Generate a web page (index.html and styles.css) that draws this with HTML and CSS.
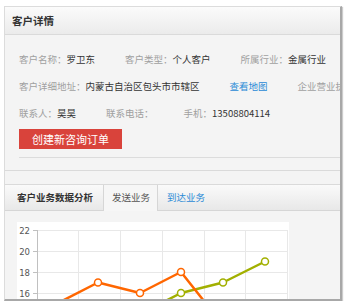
FILE: index.html
```html
<!DOCTYPE html>
<html lang="zh-CN">
<head>
    <meta charset="UTF-8">
    <meta name="viewport" content="width=device-width, initial-scale=1.0">
    <title>客户详情</title>
    <link rel="stylesheet" href="styles.css">
</head>
<body>
    <div class="frame">
        <div class="panel">
            <div class="panel-head">客户详情</div>
            <div class="panel-body">
                <div class="row">
                    <span class="item"><span class="label">客户名称：</span>罗卫东</span>
                    <span class="item"><span class="label">客户类型：</span>个人客户</span>
                    <span class="item"><span class="label">所属行业：</span>金属行业</span>
                </div>
                <div class="row">
                    <span class="item"><span class="label">客户详细地址：</span>内蒙古自治区包头市市辖区</span>
                    <a class="item link" href="#">查看地图</a>
                    <span class="item"><span class="label">企业营业执照：</span></span>
                </div>
                <div class="row">
                    <span class="item"><span class="label">联系人：</span>昊昊</span>
                    <span class="item"><span class="label">联系电话：</span></span>
                    <span class="item"><span class="label">手机：</span>13508804114</span>
                </div>
                <button class="btn-create">创建新咨询订单</button>
                <div class="divider"></div>
            </div>
        </div>

        <div class="panel panel-chart">
            <div class="tabs">
                <div class="tab tab-title">客户业务数据分析</div>
                <div class="tab tab-active">发送业务</div>
                <a class="tab tab-link" href="#">到达业务</a>
            </div>
            <div class="chart-wrap">
                <div class="chart">
                    <svg width="272" height="110" viewBox="0 0 272 110">
                        <g stroke="#e8e8e8" stroke-width="1">
                            <line x1="61.5" y1="8" x2="61.5" y2="110"/>
                            <line x1="103.5" y1="8" x2="103.5" y2="110"/>
                            <line x1="145.5" y1="8" x2="145.5" y2="110"/>
                            <line x1="187.5" y1="8" x2="187.5" y2="110"/>
                            <line x1="228.5" y1="8" x2="228.5" y2="110"/>
                            <line x1="270.5" y1="8" x2="270.5" y2="110"/>
                            <line x1="20" y1="8.5" x2="271" y2="8.5"/>
                            <line x1="20" y1="29.5" x2="271" y2="29.5"/>
                            <line x1="20" y1="50.5" x2="271" y2="50.5"/>
                            <line x1="20" y1="71.5" x2="271" y2="71.5"/>
                            <line x1="20" y1="92.5" x2="271" y2="92.5"/>
                        </g>
                        <g stroke="#c0c0c0" stroke-width="1">
                            <line x1="20.5" y1="8" x2="20.5" y2="110"/>
                            <line x1="16" y1="8.5" x2="20" y2="8.5"/>
                            <line x1="16" y1="29.5" x2="20" y2="29.5"/>
                            <line x1="16" y1="50.5" x2="20" y2="50.5"/>
                            <line x1="16" y1="71.5" x2="20" y2="71.5"/>
                            <line x1="16" y1="92.5" x2="20" y2="92.5"/>
                        </g>
                        <g class="axis-label" text-anchor="end">
                            <text x="13" y="11.5">22</text>
                            <text x="13" y="32.5">20</text>
                            <text x="13" y="53.5">18</text>
                            <text x="13" y="74.5">16</text>
                        </g>
                        <polyline fill="none" stroke="#a2b000" stroke-width="2.5" stroke-linejoin="round"
                                  points="123,92 164,71 206,60.5 248,39.5"/>
                        <g fill="#fff" stroke="#a2b000" stroke-width="1.5">
                            <circle cx="123" cy="92" r="3.5"/>
                            <circle cx="164" cy="71" r="3.5"/>
                            <circle cx="206" cy="60.5" r="3.5"/>
                            <circle cx="248" cy="39.5" r="3.5"/>
                        </g>
                        <polyline fill="none" stroke="#ff6600" stroke-width="2.5" stroke-linejoin="round"
                                  points="40,81.5 81,60.5 123,71 164,50 206,103"/>
                        <g fill="#fff" stroke="#ff6600" stroke-width="1.5">
                            <circle cx="40" cy="81.5" r="3.5"/>
                            <circle cx="81" cy="60.5" r="3.5"/>
                            <circle cx="123" cy="71" r="3.5"/>
                            <circle cx="164" cy="50" r="3.5"/>
                            <circle cx="206" cy="103" r="3.5"/>
                        </g>
                    </svg>
                </div>
            </div>
        </div>
    </div>
</body>
</html>
```

FILE: styles.css
```css
body {
    margin: 0;
    background-color: #fff;
    font-family: "Noto Sans CJK SC", "DejaVu Sans", sans-serif;
    font-size: 9.5px;
    color: #333;
}
.frame {
    margin: 6px 0 0 4px;
    width: 335px;
    height: 292px;
    overflow: hidden;
    background-color: #f4f4f4;
    border: 1px solid #dcdcdc;
    border-right: 2px solid #a8a8a8;
    border-bottom: 2px solid #a8a8a8;
    box-shadow: 1px 1px 1px #ccc;
}
.panel-head {
    height: 27px;
    line-height: 27px;
    padding-left: 7px;
    font-size: 10.5px;
    font-weight: bold;
    color: #333;
    background: linear-gradient(#fbfbfb, #ebebeb);
    border-bottom: 1px solid #dadada;
}
.panel-body {
    padding: 10px 0 12px 14px;
    border-bottom: 1px solid #dadada;
}
.row {
    display: flex;
    gap: 30px;
    height: 27px;
    align-items: center;
    white-space: nowrap;
}
.label {
    color: #a0a0a0;
}
.link {
    color: #2a8ad6;
    text-decoration: none;
}
.btn-create {
    display: block;
    margin-top: 3px;
    width: 103px;
    height: 20px;
    padding: 0;
    border: none;
    background-color: #d9433b;
    color: #fff;
    font-family: inherit;
    font-size: 11px;
    cursor: pointer;
}
.divider {
    margin-top: 8px;
    border-top: 1px solid #dcdcdc;
}
.panel-chart {
    margin-top: 13px;
    border-top: 1px solid #dadada;
}
.tabs {
    display: flex;
    height: 25px;
    background: linear-gradient(#fafafa, #e8e8e8);
    border-bottom: 1px solid #d6d6d6;
}
.tab {
    line-height: 25px;
    white-space: nowrap;
}
.tab-title {
    padding: 0 10px 0 12px;
    font-weight: bold;
    border-right: 1px solid #d6d6d6;
}
.tab-active {
    padding: 0 7px 0 8px;
    color: #555;
    background: #f6f6f6;
    border-right: 1px solid #d6d6d6;
    margin-bottom: -1px;
    height: 26px;
}
.tab-link {
    padding-left: 9px;
    color: #2a8ad6;
    text-decoration: none;
}
.chart-wrap {
    padding: 11px 0 0 12px;
}
.chart {
    width: 272px;
    height: 110px;
    background-color: #fff;
}
.chart svg {
    display: block;
}
.axis-label {
    font-family: "DejaVu Sans", sans-serif;
    font-size: 8.5px;
    fill: #555;
}
```
